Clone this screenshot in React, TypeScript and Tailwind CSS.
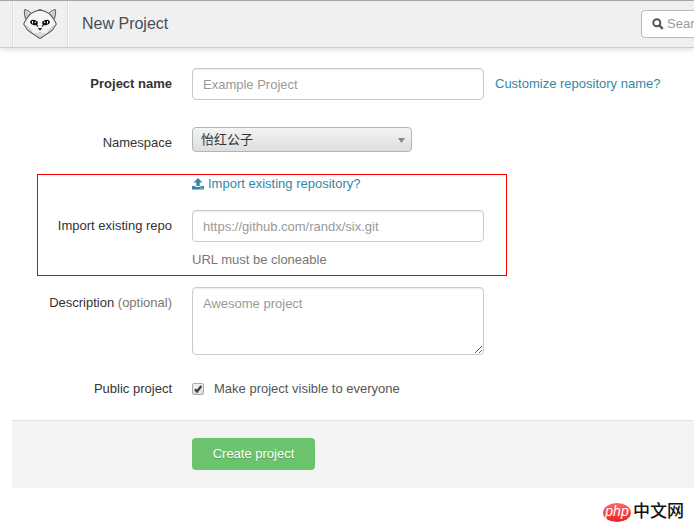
import React, { useState } from "react";

const inputClass =
  "block w-[292px] rounded border border-[#ccc] bg-white px-[10px] text-[13px] leading-5 text-[#555] placeholder:text-[#999] shadow-[inset_0_1px_1px_rgba(0,0,0,0.08)] outline-none";

const FoxLogo: React.FC = () => (
  <svg width="36" height="32" viewBox="0 0 36 32" fill="none" strokeLinejoin="round">
    <path d="M9 5.500C7.500 3.500 5.500 2 3 1.500 2 4.500 2.500 8 4 11M27 5.500C28.500 3.500 30.500 2 33 1.500 34 4.500 33.500 8 32 11" fill="#e4e4e4" stroke="#666" strokeWidth="1.200" />
    <path d="M4.500 4 5.500 8.500l2-2M31.500 4 30.500 8.500l-2-2" stroke="#999" strokeWidth="0.800" />
    <path
      d="M18 2.200C15 2.400 12 3.500 9 5.500 6 8 3.500 12 1.700 16l3.800 6L12 26.500 18 30.500l6-4 6.500-4.500L34.300 16C32.500 12 30 8 27 5.500 24 3.500 21 2.400 18 2.200Z"
      fill="#f6f6f6"
      stroke="#666"
      strokeWidth="1.200"
    />
    <path d="M16.500 1.800h3" stroke="#555" strokeWidth="1" />
    <path d="M4 17.500 10 23.500M32 17.500 26 23.500M13.500 25 18 28.500l4.500-3.500" stroke="#c8c8c8" strokeWidth="1.200" />
    <ellipse cx="12" cy="14.500" rx="3.900" ry="2.600" transform="rotate(18 12 14.500)" fill="#151515" />
    <ellipse cx="24" cy="14.500" rx="3.900" ry="2.600" transform="rotate(-18 24 14.500)" fill="#151515" />
    <path d="M10.500 13v2.500M25.500 13v2.500" stroke="#eee" strokeWidth="1" />
    <circle cx="13.300" cy="14.300" r="0.800" fill="#eee" />
    <circle cx="22.700" cy="14.300" r="0.800" fill="#eee" />
    <path d="M14.300 16.500 16 18.500M21.700 16.500 20 18.500" stroke="#222" strokeWidth="1.200" />
    <path d="M15.800 20h4.400L18 22.800Z" fill="#222" />
    <path d="M16.500 25h3" stroke="#aaa" strokeWidth="1.200" />
  </svg>
);

const SearchIcon: React.FC = () => (
  <svg width="12" height="12" viewBox="0 0 12 12" fill="none" stroke="#555" className="shrink-0">
    <circle cx="4.800" cy="4.800" r="3.500" strokeWidth="2" />
    <path d="M7.500 7.500 10.800 10.800" strokeWidth="2.400" />
  </svg>
);

const UploadIcon: React.FC = () => (
  <svg width="12" height="12" viewBox="0 0 12 12" fill="#3288a5" className="shrink-0">
    <path d="M6 0 10.500 4.500H7.700V8H4.300V4.500H1.500Z" />
    <path d="M0 8h3.500v1h5V8H12v3.500H0Z" />
    <path d="M8.500 10.200h.8M10.200 10.200h.8" stroke="#fff" strokeWidth="0.700" />
  </svg>
);

const Header: React.FC = () => (
  <header className="overflow-hidden border-t border-b border-t-[#a6a6a6] border-b-[#ccc] bg-[#f0f0f0] shadow-[0_1px_6px_rgba(0,0,0,0.15)]">
    <div className="flex h-[46px] min-w-[850px] items-center pl-3">
      <a
        href="#"
        aria-label="Dashboard"
        className="flex h-full w-14 items-center justify-center border-r border-l border-[#ddd] shadow-[1px_0_0_#fafafa,inset_1px_0_0_#fafafa]"
      >
        <FoxLogo />
      </a>
      <h1 className="ml-[14px] flex-1 text-base text-[#474d57]">New Project</h1>
      <label className="mr-2 flex h-7 w-[201px] items-center gap-[3px] rounded border border-[#bbb] bg-white px-[10px]">
        <SearchIcon />
        <input
          type="text"
          aria-label="Search"
          placeholder="Search"
          className="w-full min-w-0 bg-transparent text-[13px] outline-none placeholder:text-[#999]"
        />
      </label>
    </div>
  </header>
);

const App: React.FC = () => {
  const [isPublic, setIsPublic] = useState(true);

  return (
    <div className="min-h-screen overflow-hidden bg-white font-['Liberation_Sans','Noto_Sans_CJK_SC',sans-serif] text-[13px] leading-5 text-[#333]">
      <Header />

      <form className="pt-5" onSubmit={(e) => e.preventDefault()}>
        <div className="flex items-center gap-5">
          <label htmlFor="name" className="w-[172px] shrink-0 text-right font-bold">
            Project name
          </label>
          <div className="flex items-center gap-[11px] whitespace-nowrap">
            <input id="name" type="text" placeholder="Example Project" className={`${inputClass} h-8`} />
            <a href="#" className="text-[#3288a5]">
              Customize repository name?
            </a>
          </div>
        </div>

        <div className="mt-[27px] flex items-start gap-5">
          <label htmlFor="namespace" className="w-[172px] shrink-0 pt-[6px] text-right">
            Namespace
          </label>
          <div className="relative">
            <select
              id="namespace"
              className="block h-[25px] w-[220px] appearance-none rounded border border-[#b4b4b4] bg-linear-to-b from-[#f4f4f4] to-[#dedede] pl-2 text-[13px] text-[#333]"
            >
              <option>怡红公子</option>
            </select>
            <svg width="7" height="5" viewBox="0 0 7 5" className="pointer-events-none absolute top-[11px] right-[7px]">
              <path d="M0 0h7L3.500 5Z" fill="#888" />
            </svg>
          </div>
        </div>

        {/* Import section */}
        <section className="mt-[21px] ml-[37px] w-[470px] border border-[#f00] pb-[5px]">
          <div className="ml-[154px] flex h-[35px] items-start">
            <a href="#" className="flex items-center gap-1 leading-[18px] text-[#3288a5]">
              <UploadIcon />
              Import existing repository?
            </a>
          </div>
          <div className="flex items-start gap-5">
            <label htmlFor="import" className="w-[134px] shrink-0 pt-[6px] text-right">
              Import existing repo
            </label>
            <div>
              <input id="import" type="text" placeholder="https://github.com/randx/six.git" className={`${inputClass} h-8`} />
              <p className="mt-2 text-[#777]">URL must be cloneable</p>
            </div>
          </div>
        </section>

        <div className="mt-[11px] flex items-start gap-5">
          <label htmlFor="description" className="w-[172px] shrink-0 pt-[6px] text-right">
            Description <span className="text-[#777]">(optional)</span>
          </label>
          <textarea id="description" placeholder="Awesome project" className={`${inputClass} h-[68px] resize py-[6px]`} />
        </div>

        <div className="mt-6 flex items-start gap-5">
          <label htmlFor="public" className="w-[172px] shrink-0 text-right">
            Public project
          </label>
          <label className="flex items-center gap-[10px] text-[#555]">
            <span className="relative flex size-3">
              <input
                id="public"
                type="checkbox"
                checked={isPublic}
                onChange={(e) => setIsPublic(e.target.checked)}
                className="size-3 appearance-none rounded-xs border border-[#aaa] bg-linear-to-b from-[#f2f2f2] to-[#ddd]"
              />
              {isPublic && (
                <svg width="12" height="12" viewBox="0 0 12 12" className="pointer-events-none absolute inset-0">
                  <path d="M3 6.200 5 8.500 9.300 3" fill="none" stroke="#3c3c3c" strokeWidth="2.200" />
                </svg>
              )}
            </span>
            Make project visible to everyone
          </label>
        </div>

        <div className="mt-[21px] ml-3 border-t border-[#e1e1e1] bg-[#f4f4f4] pt-[17px] pb-[18px] pl-[180px]">
          <button
            type="submit"
            className="h-8 w-[123px] rounded bg-[#6bc46d] text-[13px] text-white [text-shadow:0_1px_1px_rgba(0,0,0,0.2)]"
          >
            Create project
          </button>
        </div>
      </form>

      <div className="mt-[14px] mr-[10px] flex items-center justify-end gap-[2px]">
        <span className="flex h-[19px] w-7 items-center justify-center rounded-[50%] bg-linear-to-b from-[#f66] to-[#e81c1c] pb-[2px] text-[14px] text-white italic">
          php
        </span>
        <span className="text-[17px] font-medium text-[#111]">中文网</span>
      </div>
    </div>
  );
};

export default App;
